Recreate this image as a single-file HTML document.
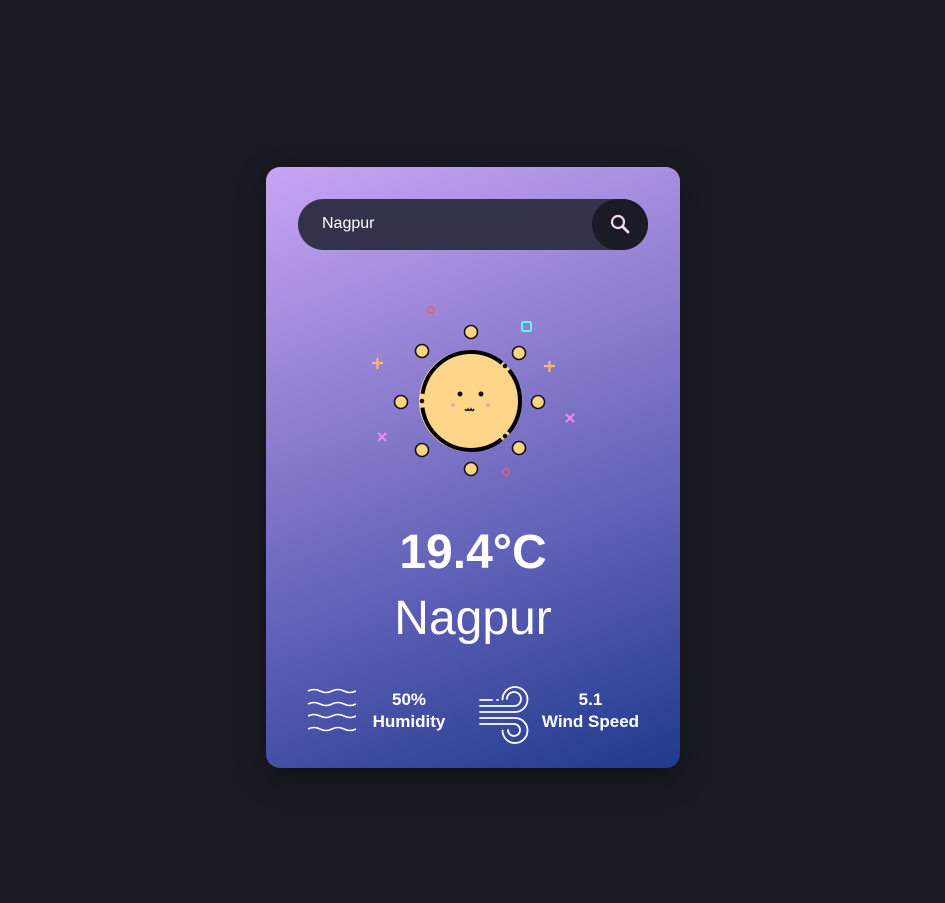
<!DOCTYPE html><html><head><style>
body{margin:0;background:#1a1a23;width:945px;height:903px;position:relative;font-family:"Liberation Sans",sans-serif;overflow:hidden}
.card{position:absolute;left:266px;top:167px;width:414px;height:601px;border-radius:14px;background:linear-gradient(160deg,#c8a4f6 0%,#8f7fd0 35%,#5d5fb5 65%,#1f3a8c 100%);box-shadow:0 10px 30px rgba(0,0,0,.4)}
.search{position:absolute;left:32px;top:32px;width:350px;height:51px;border-radius:26px;background:#32334a}
.search span{position:absolute;left:24px;top:16px;color:#fff;font-size:16px}
.btn{position:absolute;right:0;top:0;width:56px;height:51px;border-radius:26px;background:#1b1b27}
.t{position:absolute;left:0;width:414px;text-align:center;color:#fff;font-weight:bold}
.s{position:absolute;color:#fff;font-size:17px;text-align:center;line-height:22px;font-weight:bold}
</style></head><body>
<div class="card">
<div class="search"><span>Nagpur</span><div class="btn"><svg width="56" height="51"><circle cx="26" cy="23" r="6" fill="none" stroke="#f3d9e3" stroke-width="2.2"/><path d="M30.5 27.5 L36 33" stroke="#f3d9e3" stroke-width="2.8" stroke-linecap="round"/></svg></div></div>
<div class="t" style="top:358px;font-size:48px">19.4°C</div>
<div class="t" style="top:424px;font-size:48px;font-weight:normal">Nagpur</div>
<div class="s" style="left:98px;top:522px;width:90px">50%<br>Humidity</div>
<div class="s" style="left:272px;top:522px;width:105px">5.1<br>Wind Speed</div>
</div>
<svg style="position:absolute;left:0;top:0" width="945" height="903">
<g fill="#fed384" stroke="#111" stroke-width="1.6">
<circle cx="471" cy="332" r="6.5"/><circle cx="471" cy="469" r="6.5"/><circle cx="401" cy="402" r="6.5"/><circle cx="538" cy="402" r="6.5"/>
<circle cx="422" cy="351" r="6.5"/><circle cx="519" cy="353" r="6.5"/><circle cx="422" cy="450" r="6.5"/><circle cx="519" cy="448" r="6.5"/>
</g>
<circle cx="470" cy="401" r="51" fill="#fed68a"/>
<circle cx="471" cy="401" r="49" fill="none" stroke="#000" stroke-width="4" stroke-dasharray="34 10 103 14 103 10 34"/>
<g fill="#111"><circle cx="505" cy="436" r="2.3"/><circle cx="505" cy="366" r="2.3"/><circle cx="422" cy="401" r="2.3"/></g>
<circle cx="460" cy="394" r="2.5" fill="#111"/><circle cx="481" cy="394" r="2.5" fill="#111"/>
<circle cx="453" cy="405" r="1.8" fill="#f9a"/><circle cx="488" cy="405" r="1.8" fill="#f9a"/>
<path d="M465 409 q1.5 3 3 0 q1.5 3 3 0 q1.5 3 3 0" fill="none" stroke="#111" stroke-width="1.4"/>
<circle cx="431" cy="310" r="3.3" fill="none" stroke="#f05a78" stroke-width="1.6"/>
<circle cx="506" cy="472" r="3.3" fill="none" stroke="#f05a78" stroke-width="1.6"/>
<rect x="522" y="322" width="9" height="9" rx="1.5" fill="none" stroke="#6ff" stroke-width="1.8"/>
<g stroke="#ffb77a" stroke-width="2.2"><path d="M372 363h11M377.5 358v11M544 366h11M549.5 361v11"/></g>
<g stroke="#ec8cf0" stroke-width="2.2"><path d="M378 433l8 8M386 433l-8 8M566 414l8 8M574 414l-8 8"/></g>
<g fill="none" stroke="#fff" stroke-width="1.6">
<path d="M308 691q6-3 12 0t12 0t12 0t12 0M308 704q6-3 12 0t12 0t12 0t12 0M308 716q6-3 12 0t12 0t12 0t12 0M308 729q6-3 12 0t12 0t12 0t12 0"/>
</g>
<g fill="none" stroke="#fff" stroke-width="1.8" stroke-linecap="round">
<path d="M480 700h12M497 700h1"/>
<path d="M480 706H514A7 7 0 1 0 507 699"/>
<path d="M480 712H515A12.5 12.5 0 1 0 502.5 699.5"/>
<path d="M480 718H515A12.5 12.5 0 1 1 502.5 730.5"/>
<path d="M480 724H514A6 6 0 1 1 508 730"/>
</g>
</svg>
</body></html>
